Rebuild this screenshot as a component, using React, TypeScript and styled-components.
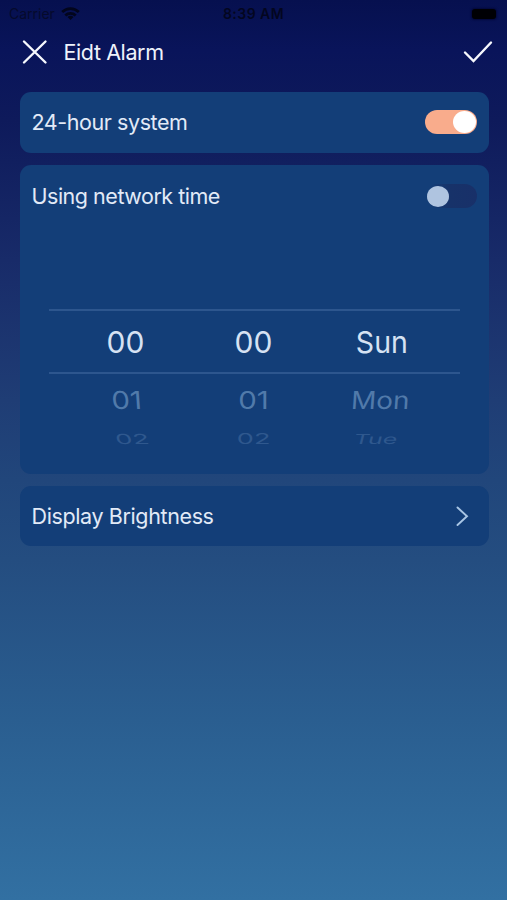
import React from 'react';
import styled, { createGlobalStyle } from 'styled-components';

const GlobalStyle = createGlobalStyle`
  * { box-sizing: border-box; }
  body { margin: 0; background: #3270a2; }
`;

const Screen = styled.main`
  width: 507px;
  height: 900px;
  overflow: hidden;
  font-family: Inter, 'Liberation Sans', sans-serif;
  background: linear-gradient(
    #06104f 0,
    #09145a 50px,
    #0e1a5b 120px,
    #182b69 260px,
    #1f3d75 400px,
    #21467b 480px,
    #244d80 560px,
    #2a5e90 720px,
    #3270a2 900px
  );
`;

const StatusBar = styled.div`
  display: grid;
  grid-template-columns: 1fr auto 1fr;
  align-items: center;
  height: 27px;
  padding: 0 11px 0 9px;
`;

const Carrier = styled.div`
  display: flex;
  align-items: center;
  gap: 6px;
  font-size: 14px;
  color: #050a2c;
`;

const Clock = styled.div`
  padding-left: 2px;
  font-size: 14px;
  font-weight: 600;
  letter-spacing: 0.45px;
  color: #03061f;
`;

const Battery = styled.div`
  justify-self: end;
  width: 24px;
  height: 10px;
  border-radius: 3px;
  background: #000004;
  box-shadow: 0 0 2px 1px #03083a;
`;

const Header = styled.header`
  display: flex;
  align-items: center;
  height: 50px;
  padding: 0 14px 0 22px;
`;

const Title = styled.h1<{ $track: number }>`
  flex: 1;
  margin: 0 0 0 15.5px;
  font-size: 21.5px;
  font-weight: 400;
  line-height: 28px;
  letter-spacing: ${(p) => p.$track}px;
  color: #eef2fb;
`;

const IconButton = styled.button`
  display: flex;
  padding: 0;
  border: 0;
  background: none;
  color: #f6f8fd;
`;

const Cards = styled.div`
  display: flex;
  flex-direction: column;
  gap: 12px;
  padding: 14.5px 18.5px 0 19.5px;
`;

const Card = styled.section<{ $height: number }>`
  height: ${(p) => p.$height}px;
  border-radius: 11px;
  background: #133e78;
`;

const Row = styled.div<{ $height: number }>`
  display: flex;
  align-items: center;
  justify-content: space-between;
  height: ${(p) => p.$height}px;
  padding: 0 12px;
`;

const Label = styled.span<{ $track: number }>`
  font-size: 21.5px;
  line-height: 28px;
  letter-spacing: ${(p) => p.$track}px;
  color: #e2eaf7;
`;

const Toggle = styled.span<{ $on: boolean }>`
  display: flex;
  align-items: center;
  justify-content: ${(p) => (p.$on ? 'flex-end' : 'flex-start')};
  width: 52px;
  height: 24px;
  padding: 0 1px 0 ${(p) => (p.$on ? 1 : 2)}px;
  border-radius: 12px;
  background: ${(p) =>
    p.$on ? '#f9ac8c' : 'linear-gradient(90deg, #133e78 4px, #173269 26px, #183069)'};
`;

const Knob = styled.span<{ $on: boolean }>`
  width: ${(p) => (p.$on ? 23 : 22)}px;
  height: ${(p) => (p.$on ? 22 : 21)}px;
  border-radius: 50%;
  background: ${(p) => (p.$on ? '#ffffff' : '#afc4e0')};
`;

const Picker = styled.div`
  margin: 81px 28.5px 0 29px;
`;

const PickerRow = styled.div<{ $height: number; $selected?: boolean }>`
  display: grid;
  grid-template-columns: 141px 128px 1fr;
  align-items: center;
  height: ${(p) => p.$height}px;
  border: solid #2d568e;
  border-width: ${(p) => (p.$selected ? '2px 0' : 0)};
`;

const Value = styled.span<{ $color: string; $x: number; $y: number; $sx: number; $sy: number; $skew: number }>`
  justify-self: center;
  font-size: 30px;
  line-height: 36px;
  color: ${(p) => p.$color};
  transform: translate(${(p) => p.$x}px, ${(p) => p.$y}px) skewX(${(p) => p.$skew}deg)
    scale(${(p) => p.$sx}, ${(p) => p.$sy});
`;

const rows = [
  {
    height: 65, color: '#d6e2f3', y: 0.5, sy: 1,
    cells: [
      { text: '00', x: 6.5, sx: 1, skew: 0 },
      { text: '00', x: 0, sx: 1, skew: 0 },
      { text: 'Sun', x: -6.5, sx: 0.95, skew: 0 },
    ],
  },
  {
    height: 52, color: '#517aaa', y: 0, sy: 0.82,
    cells: [
      { text: '01', x: 8, sx: 0.98, skew: 4 },
      { text: '01', x: 0, sx: 0.98, skew: 0 },
      { text: 'Mon', x: -8, sx: 0.93, skew: -4 },
    ],
  },
  {
    height: 26, color: '#2f588e', y: -5, sy: 0.46,
    cells: [
      { text: '02', x: 13.5, sx: 0.9, skew: 14 },
      { text: '02', x: 0, sx: 0.9, skew: 0 },
      { text: 'Tue', x: -13.5, sx: 0.83, skew: -14 },
    ],
  },
];

const CloseIcon = () => (
  <svg width="26" height="26" viewBox="0 0 26 26" fill="none" stroke="currentColor" strokeWidth="2.4" strokeLinecap="round">
    <path d="M2 2.500 23.500 23.500M23.500 2.500 2 23.500" />
  </svg>
);

const CheckIcon = () => (
  <svg width="30" height="24" viewBox="0 0 30 24" fill="none" stroke="currentColor" strokeWidth="2.4" strokeLinecap="round">
    <path d="M2 12.500 10.500 21 28 2.500" />
  </svg>
);

const WifiIcon = () => (
  <svg width="19" height="14" viewBox="0 0 19 14" fill="none" stroke="#02051c" strokeWidth="2.8">
    <path d="M1.2 5.1C6 .5 13 .5 17.8 5.1M4.3 8.4c3-2.8 7.4-2.8 10.4 0" />
    <path d="m9.5 13-3-3c1.800-1.600 4.200-1.600 6 0Z" fill="#02051c" stroke="none" />
  </svg>
);

const ChevronIcon = () => (
  <svg width="24" height="22" viewBox="0 0 24 22" fill="none" stroke="#a9c6e5" strokeWidth="1.9" strokeLinecap="round">
    <path d="M4.500 2.500 14 11.200 4.500 20" />
  </svg>
);

const Switch = ({ on, label }: { on: boolean; label: string }) => (
  <Toggle $on={on} role="switch" aria-checked={on} aria-label={label}>
    <Knob $on={on} />
  </Toggle>
);

export default function App() {
  return (
    <Screen>
      <GlobalStyle />
      <StatusBar>
        <Carrier>
          Carrier
          <WifiIcon />
        </Carrier>
        <Clock>8:39 AM</Clock>
        <Battery />
      </StatusBar>
      <Header>
        <IconButton aria-label="Close"><CloseIcon /></IconButton>
        <Title $track={-0.4}>Eidt Alarm</Title>
        <IconButton aria-label="Save"><CheckIcon /></IconButton>
      </Header>
      <Cards>
        <Card $height={61}>
          <Row $height={61}>
            <Label $track={-0.43}>24-hour system</Label>
            <Switch on label="24-hour system" />
          </Row>
        </Card>
        <Card $height={309}>
          <Row $height={63}>
            <Label $track={-0.48}>Using network time</Label>
            <Switch on={false} label="Using network time" />
          </Row>
          <Picker>
            {rows.map((row, i) => (
              <PickerRow key={row.cells[0].text} $height={row.height} $selected={i === 0}>
                {row.cells.map((c, j) => (
                  <Value key={j} $color={row.color} $x={c.x} $y={row.y} $sx={c.sx} $sy={row.sy} $skew={c.skew}>
                    {c.text}
                  </Value>
                ))}
              </PickerRow>
            ))}
          </Picker>
        </Card>
        <Card $height={60.5}>
          <Row $height={61}>
            <Label $track={-0.38}>Display Brightness</Label>
            <ChevronIcon />
          </Row>
        </Card>
      </Cards>
    </Screen>
  );
}
